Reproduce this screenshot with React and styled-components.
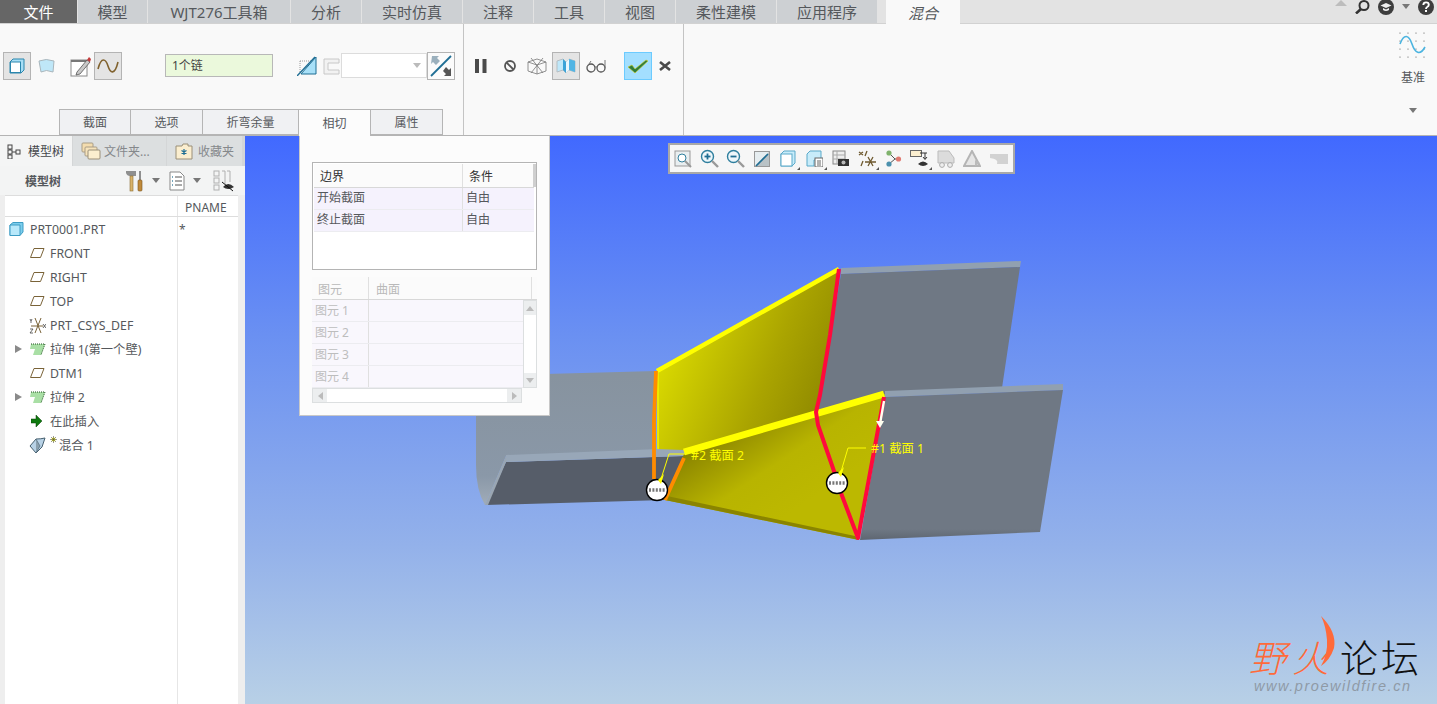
import React from 'react';
import styled, { createGlobalStyle } from 'styled-components';

const GlobalStyle = createGlobalStyle`
  html, body {
    margin: 0;
    padding: 0;
    background: #f4f4f4;
    font-family: "Noto Sans", "Noto Sans CJK SC", sans-serif;
  }
`;

const Page = styled.div`
  width: 1437px;
  height: 704px;
  overflow: hidden;
  display: flex;
  flex-direction: column;
  position: relative;
`;

/* top tabs */
const TabBar = styled.div`
  display: flex;
  height: 23px;
  background: #e3e3e3;
  align-items: stretch;
  position: relative;
`;

const TopTab = styled.div`
  width: ${p => p.$w}px;
  margin-right: 1px;
  box-sizing: border-box;
  display: flex;
  align-items: center;
  justify-content: center;
  font-size: 15px;
  background: ${p => (p.$dark ? '#666666' : '#cdd0d3')};
  color: ${p => (p.$dark ? '#ffffff' : '#55585c')};
`;

const ContextTab = styled.div`
  width: 74px;
  margin-left: 8px;
  margin-bottom: -1px;
  position: relative;
  z-index: 2;
  display: flex;
  align-items: center;
  justify-content: center;
  font-size: 15px;
  font-style: italic;
  color: #55585c;
  background: #f9f9f9;
`;

const TopRight = styled.div`
  margin-left: auto;
  display: flex;
  align-items: flex-start;
  width: 102px;
  gap: 8px;
  padding-right: 3px;
  box-sizing: border-box;
`;

/* ribbon */
const Ribbon = styled.div`
  display: flex;
  height: 113px;
  background: #f9f9f9;
  border-top: 1px solid #d2d2d2;
  border-bottom: 1px solid #b4b4b4;
  box-sizing: border-box;
`;

const Group = styled.div`
  width: ${p => p.$w}px;
  box-sizing: border-box;
  border-right: 1px solid #c4c4c4;
  display: flex;
  flex-direction: column;
`;

const ControlRow = styled.div`
  height: 85px;
  padding-top: 28px;
  box-sizing: border-box;
  display: flex;
  align-items: flex-start;
`;

const Slot = styled.div`
  width: ${p => p.$w}px;
  height: 28px;
  margin-left: ${p => p.$ml || 0}px;
  box-sizing: border-box;
  display: flex;
  align-items: center;
  justify-content: center;
  flex: none;
  ${p => p.$pressed && 'background: #e4e4e4; border: 1px solid #b4b4b4;'}
  ${p => p.$ok && 'background: #a3dfff; border: 1px solid #6ccbff;'}
  ${p => p.$framed && 'background: #fbfbfb; border: 1px solid #b4b4b4;'}
`;

const ChainInput = styled.div`
  width: 108px;
  height: 23px;
  margin-left: 43px;
  margin-top: 2px;
  box-sizing: border-box;
  flex: none;
  background: #ebf9dc;
  border: 1px solid #b8b8b8;
  font-size: 12px;
  color: #444;
  line-height: 21px;
  padding-left: 6px;
`;

const Combo = styled.div`
  width: 86px;
  height: 25px;
  margin-top: 1px;
  margin-left: 1px;
  box-sizing: border-box;
  flex: none;
  background: #fff;
  border: 1px solid #dcdcdc;
  display: flex;
  align-items: center;
  justify-content: flex-end;
  padding-right: 5px;
`;

const Caret = styled.span`
  width: 0;
  height: 0;
  flex: none;
  margin-top: ${p => p.$mt || 0}px;
  border-left: 4px solid transparent;
  border-right: 4px solid transparent;
  border-top: 5px solid ${p => p.$c || '#777'};
`;

const SubTabs = styled.div`
  display: flex;
  padding-left: 59px;
  height: 26px;
  position: relative;
  z-index: 3;
`;

const SubTab = styled.div`
  width: ${p => p.$w}px;
  height: ${p => (p.$active ? 27 : 26)}px;
  box-sizing: border-box;
  border: 1px solid #b5b5b5;
  border-left-width: ${p => (p.$first ? 1 : 0)}px;
  border-bottom: ${p => (p.$active ? 'none' : '1px solid #b5b5b5')};
  background: ${p => (p.$active ? '#fcfcfc' : '#f0f1f3')};
  display: flex;
  align-items: center;
  justify-content: center;
  font-size: 12px;
  color: #55585c;
`;

const DatumColumn = styled.div`
  margin-left: auto;
  width: 48px;
  display: flex;
  flex-direction: column;
  align-items: center;
  padding-top: 8px;
  font-size: 12px;
  color: #55585c;
`;

const DatumLabel = styled.div`
  margin-top: 10px;
  margin-bottom: 22px;
`;

/* main */
const Main = styled.div`
  flex: 1;
  display: flex;
  position: relative;
  min-height: 0;
`;

const LeftPanel = styled.div`
  width: 245px;
  flex: none;
  background: #eeeeee;
  display: flex;
  flex-direction: column;
`;

const PanelTabs = styled.div`
  display: flex;
  height: 30px;
  background: #d4d6d7;
  align-items: stretch;
`;

const PanelTab = styled.div`
  width: ${p => p.$w}px;
  margin-right: 1px;
  box-sizing: border-box;
  display: flex;
  align-items: center;
  gap: ${p => p.$gap}px;
  padding-left: ${p => p.$pl}px;
  font-size: 12px;
  background: ${p => (p.$active ? '#f4f5f5' : '#dcdfe0')};
  color: ${p => (p.$active ? '#44474b' : '#85888b')};
`;

const PanelBar = styled.div`
  height: 29px;
  background: #f3f4f4;
  display: flex;
  align-items: center;
  padding-left: 25px;
  font-size: 12px;
  font-weight: 700;
  color: #55585c;
`;

const BarIcons = styled.div`
  display: flex;
  align-items: center;
  margin-left: 65px;
`;

const BarItem = styled.div`
  display: flex;
  align-items: center;
  margin-right: ${p => p.$mr}px;
  gap: 8px;
`;

const TreePane = styled.div`
  flex: 1;
  margin: 0 7px 0 5px;
  background: #ffffff;
  position: relative;
  display: flex;
  flex-direction: column;
`;

const ColumnHead = styled.div`
  height: 22px;
  box-sizing: border-box;
  border-top: 1px solid #dddddd;
  border-bottom: 1px solid #dddddd;
  display: flex;
  font-size: 12px;
  color: #55585c;
`;

const NameCol = styled.div`
  width: 173px;
  flex: none;
  box-sizing: border-box;
  border-right: 1px solid #e6e6e6;
`;

const PnameCol = styled.div`
  padding-left: 7px;
  line-height: 24px;
`;

const TreeRows = styled.div`
  flex: 1;
  display: flex;
`;

const TreeList = styled.div`
  width: 173px;
  flex: none;
  box-sizing: border-box;
  border-right: 1px solid #e6e6e6;
`;

const TreeRow = styled.div`
  height: 24px;
  display: flex;
  align-items: center;
  font-size: 12.3px;
  color: #55585c;
  white-space: nowrap;
  padding-left: ${p => p.$pl}px;
`;

const Expander = styled.span`
  width: 0;
  height: 0;
  margin-right: 7px;
  border-top: 4px solid transparent;
  border-bottom: 4px solid transparent;
  border-left: 7px solid #8a8a8a;
`;

const TreeLabel = styled.span`
  margin-left: ${p => p.$ml}px;
`;

const StarMark = styled.span`
  width: 7px;
  margin-left: 4px;
  align-self: flex-start;
  margin-top: 3px;
  margin-right: 2px;
  display: flex;
`;

const Stars = styled.div`
  padding: 4px 0 0 1px;
  font-size: 12px;
  color: #55585c;
`;

/* viewport */
const Viewport = styled.div`
  flex: 1;
  position: relative;
  background: linear-gradient(180deg, #4169ff 0%, #6a90f2 35%, #93b1ea 72%, #b8d0e6 100%);
`;

const SceneSvg = styled.svg`
  display: block;
`;

const SceneText = styled.text`
  font-size: 12.3px;
  fill: #ffff00;
  font-family: "Noto Sans", "Noto Sans CJK SC", sans-serif;
`;

const ViewTools = styled.div`
  position: absolute;
  left: 423px;
  top: 7px;
  width: 347px;
  height: 31px;
  box-sizing: border-box;
  background: #f6f6f6;
  border: 2px solid #a8a8a8;
  display: flex;
  align-items: center;
`;

const ViewTool = styled.div`
  width: 26.3px;
  height: 22px;
  flex: none;
  display: flex;
  align-items: center;
  justify-content: center;
  position: relative;
  ${p => p.$more && `
    &::after {
      content: '';
      position: absolute;
      right: 1px;
      bottom: 0;
      border-left: 3px solid transparent;
      border-bottom: 3px solid #555;
    }
  `}
`;

const Watermark = styled.div`
  position: absolute;
  right: 18px;
  bottom: 10px;
  width: 170px;
`;

const MarkLine = styled.div`
  display: flex;
  align-items: center;
  height: 44px;
  position: relative;
  font-family: "Noto Sans CJK SC", sans-serif;
  line-height: 44px;
`;

const MarkWild = styled.span`
  font-size: 37px;
  font-style: italic;
  font-weight: 300;
  color: #ff6a3a;
  letter-spacing: 6px;
  width: 91px;
  flex: none;
  white-space: nowrap;
`;

const MarkForum = styled.span`
  font-size: 38px;
  font-weight: 300;
  color: #111;
  letter-spacing: 3px;
  white-space: nowrap;
`;

const MarkFlame = styled.svg`
  position: absolute;
  left: 66px;
  top: -18px;
`;

const MarkUrl = styled.div`
  font-size: 14.5px;
  font-style: italic;
  color: #8f9aa6;
  letter-spacing: 1.55px;
  font-family: "Liberation Sans", sans-serif;
  padding-left: 5px;
  white-space: nowrap;
`;

/* dashboard slide-up */
const Popup = styled.div`
  position: absolute;
  left: 299px;
  top: 0;
  width: 251px;
  height: 280px;
  box-sizing: border-box;
  background: #fcfcfc;
  border: 1px solid #c8c8c8;
  border-top: none;
  padding: 26px 12px 0;
`;

const BoundTable = styled.div`
  width: 225px;
  height: 108px;
  box-sizing: border-box;
  background: #fff;
  border: 1px solid #b4b4b4;
  padding: 1px 2px 0 1px;
`;

const HeadRow = styled.div`
  display: flex;
  height: ${p => p.$h}px;
  box-sizing: border-box;
  background: #fbfbfb;
  border-bottom: 1px solid #d8d8d8;
  font-size: 12px;
  color: ${p => (p.$dim ? '#b9b9b9' : '#333')};
`;

const DataRow = styled.div`
  display: flex;
  height: 22px;
  box-sizing: border-box;
  background: ${p => (p.$dim ? '#f9f7fd' : '#f5f2fd')};
  border-bottom: 1px solid #ececf0;
  font-size: 12px;
  color: ${p => (p.$dim ? '#bdbdbd' : '#55585c')};
  line-height: ${p => (p.$dim ? 21 : 20)}px;
`;

const Cell = styled.div`
  width: ${p => p.$w}px;
  flex: none;
  box-sizing: border-box;
  padding-left: ${p => p.$pl}px;
  line-height: ${p => (p.$head ? '26px' : 'inherit')};
  border-right: ${p => (p.$line ? '1px solid #e0e0e0' : 'none')};
`;

const EdgeBar = styled.div`
  width: 3px;
  flex: none;
  background: #cfcfcf;
`;

const ElemBlock = styled.div`
  width: 225px;
  margin-top: 7px;
`;

const ElemBody = styled.div`
  display: flex;
`;

const ElemRows = styled.div`
  width: 211px;
  flex: none;
`;

const VScroll = styled.div`
  width: 14px;
  flex: none;
  box-sizing: border-box;
  border: 1px solid #dcdfe0;
  background: #fff;
  display: flex;
  flex-direction: column;
  justify-content: space-between;
`;

const HScroll = styled.div`
  width: 210px;
  height: 15px;
  box-sizing: border-box;
  border: 1px solid #dcdfe0;
  background: #fff;
  display: flex;
  justify-content: space-between;
`;

const ScrollBtn = styled.div`
  width: ${p => (p.$h ? 14 : 12)}px;
  height: ${p => (p.$h ? 13 : 14)}px;
  background: #eceeef;
  display: flex;
  align-items: center;
  justify-content: center;
`;

const Tri = styled.span`
  width: 0;
  height: 0;
  border: 4px solid transparent;
  ${p => p.$dir === 'up' && 'border-top: 0; border-bottom: 5px solid #bbb;'}
  ${p => p.$dir === 'down' && 'border-bottom: 0; border-top: 5px solid #bbb;'}
  ${p => p.$dir === 'left' && 'border-left: 0; border-right: 5px solid #bbb;'}
  ${p => p.$dir === 'right' && 'border-right: 0; border-left: 5px solid #bbb;'}
`;

/* icons */
const Ic = ({ w = 20, h = 20, children }) => (
  <svg width={w} height={h} viewBox={`0 0 ${w} ${h}`}>{children}</svg>
);

const SolidIcon = () => (
  <Ic w={16} h={16}>
    <path d="M1 4 L4 1 H15 V12 L12 15 H1 Z" fill="#a8def5" stroke="#2a86ad" />
    <rect x="1.5" y="4" width="10" height="10.5" fill="#fff" stroke="#2a86ad" />
  </Ic>
);
const SurfaceIcon = () => (
  <Ic w={17} h={16}>
    <path d="M1 3 Q8 0 16 3 L15 14 Q8 11 3 14 Z" fill="#bfe7f8" stroke="#a9b6bc" />
  </Ic>
);
const SketchIcon = () => (
  <Ic w={22} h={21}>
    <rect x="1" y="4" width="16" height="16" fill="#fff" stroke="#8a8a8a" />
    <rect x="1" y="4" width="16" height="2" fill="#777" />
    <path d="M7 16 L17 4 L20 6 L10 18 L6 19 Z" fill="#c9c9c9" stroke="#555" strokeWidth="0.8" />
    <path d="M17 4 L19 1 L21 3 L20 6 Z" fill="#c43c3c" />
  </Ic>
);
const WaveIcon = ({ color = '#80622e', w = 22, h = 14 }) => (
  <Ic w={w} h={h}>
    <path d={`M1 ${h - 4} C ${w * 0.2} -3, ${w * 0.4} 0, ${w * 0.5} ${h / 2} S ${w * 0.8} ${h + 3}, ${w - 1} 3`} fill="none" stroke={color} strokeWidth="1.6" />
  </Ic>
);
const TangentIcon = () => (
  <Ic w={20} h={20}>
    <path d="M3 5 H15 M3 5 V16" stroke="#999" strokeDasharray="1 1" fill="none" />
    <path d="M4 18 H19 V1 Z" fill="#a8e0f8" stroke="#1f6e94" />
    <path d="M0 20 L18 1" stroke="#1f6e94" strokeWidth="1.4" />
  </Ic>
);
const OffsetIcon = () => (
  <Ic w={17} h={17}>
    <path d="M1 1 H16 V5 H5 V12 H16 V16 H1 Z" fill="#f2f2f2" stroke="#c8c8c8" />
  </Ic>
);
const FlipIcon = () => (
  <Ic w={24} h={24}>
    <path d="M2 22 L22 2" stroke="#1f6e94" strokeWidth="1.8" />
    <path d="M3 2 H10 L8 4 L11 7 L7 11 L4 8 L2 10 Z" fill="#9bb0bd" />
    <path d="M22 22 H15 L17 20 L14 17 L17 13 L20 16 L22 14 Z" fill="#555" />
  </Ic>
);
const PauseIcon = () => (
  <Ic w={12} h={14}>
    <rect x="0" y="0" width="4" height="14" fill="#4a4a4a" />
    <rect x="7.5" y="0" width="4" height="14" fill="#4a4a4a" />
  </Ic>
);
const StopIcon = () => (
  <Ic w={14} h={14}>
    <circle cx="7" cy="7" r="5" fill="none" stroke="#555" strokeWidth="1.8" />
    <path d="M3.5 3.5 L10.5 10.5" stroke="#555" strokeWidth="1.8" />
  </Ic>
);
const WireIcon = () => (
  <Ic w={20} h={20}>
    <path d="M1 6 L10 3 L19 6 V15 L10 18 L1 15 Z M1 6 L10 9 L19 6 M10 9 V18 M4 2 L16 17 M16 2 L4 17" fill="none" stroke="#777" strokeWidth="0.8" />
  </Ic>
);
const PreviewIcon = () => (
  <Ic w={20} h={16}>
    <path d="M1 3 L7 1 L10 4 L13 1 L19 3 V14 L13 12 L10 15 L7 12 L1 14 Z" fill="#bfe8fa" stroke="#b5bec3" />
    <path d="M7 1 L10 4 V15 L7 12 Z" fill="#3aa3d8" />
    <path d="M13 1 L10 4 V15 L13 12 Z" fill="#e9f7fe" />
    <path d="M13 1 L19 3 V14 L13 12 Z" fill="#53b5e4" />
  </Ic>
);
const GlassesIcon = () => (
  <Ic w={20} h={14}>
    <circle cx="5" cy="9" r="4" fill="none" stroke="#555" strokeWidth="1.3" />
    <circle cx="15" cy="9" r="4" fill="none" stroke="#555" strokeWidth="1.3" />
    <path d="M1 8 L5 2 M9 8 H11 M19 9 V1" fill="none" stroke="#777" />
  </Ic>
);
const CheckIcon = () => (
  <Ic w={22} h={16}>
    <path d="M1 9 L5 7 L8 11 L19 2 L21 3 L8 15 Z" fill="#2f7d3e" stroke="#d8d020" strokeWidth="0.6" />
  </Ic>
);
const CrossIcon = () => (
  <Ic w={12} h={10}>
    <path d="M1 1 L11 9 M11 1 L1 9" stroke="#4a4a4a" strokeWidth="2.6" />
  </Ic>
);
const DatumCurveIcon = () => (
  <Ic w={28} h={26}>
    {[1, 9, 17, 25].map(x => [1, 9, 17, 25].map(y => <circle key={`${x}${y}`} cx={x} cy={y} r="0.6" fill="#555" />))}
    <path d="M1 12 C5 1, 10 3, 13 12 S21 24, 26 15" fill="none" stroke="#4bb4e0" strokeWidth="1.6" />
  </Ic>
);
const SearchIcon = () => (
  <Ic w={15} h={14}>
    <circle cx="9" cy="5.5" r="4.5" fill="none" stroke="#333" strokeWidth="2" />
    <path d="M6 9 L1 13.5" stroke="#333" strokeWidth="2.6" />
  </Ic>
);
const CapIcon = () => (
  <Ic w={16} h={15}>
    <circle cx="8" cy="7" r="8" fill="#3d3d3d" />
    <path d="M2.5 5.5 L8 3 L13.5 5.5 L8 8 Z M5 8 V10 Q8 12 11 10 V8 L8 9.4 Z" fill="#eee" />
  </Ic>
);
const HelpIcon = () => (
  <Ic w={16} h={15}>
    <circle cx="8" cy="7" r="8" fill="#3d3d3d" />
    <path d="M5.3 5 Q5.5 2.4 8 2.4 Q10.8 2.4 10.8 4.8 Q10.8 6.2 9.2 7 Q8 7.6 8 9" fill="none" stroke="#fff" strokeWidth="1.9" />
    <rect x="7" y="10" width="2" height="2" fill="#fff" />
  </Ic>
);
const NavUp = () => (
  <Ic w={12} h={6}>
    <path d="M0 6 L6 0 L12 6 Z" fill="#bdbdbd" />
  </Ic>
);
const NodesIcon = () => (
  <Ic w={14} h={15}>
    <g fill="none" stroke="#444">
      <rect x="1" y="1" width="4" height="4" />
      <rect x="1" y="6" width="4" height="4" />
      <rect x="1" y="11" width="4" height="4" />
      <rect x="9" y="6" width="4" height="4" />
      <path d="M3 5 V6 M3 10 V11 M5 8 H9" />
    </g>
  </Ic>
);
const FolderStackIcon = () => (
  <Ic w={20} h={20}>
    <rect x="1" y="2" width="11" height="9" rx="1" fill="#f3dcae" stroke="#a99d86" />
    <rect x="4" y="6" width="12" height="9" rx="1" fill="#f6e3bb" stroke="#a99d86" />
    <rect x="7" y="9" width="12" height="9" rx="1" fill="#fbeecf" stroke="#9a8f78" />
  </Ic>
);
const FavIcon = () => (
  <Ic w={18} h={17}>
    <path d="M1 3 H7 L8 1 H13 V3 H17 V16 H1 Z" fill="#fbeecf" stroke="#9a8f78" />
    <path d="M9 6 V12 M6.5 7.5 L11.5 10.5 M11.5 7.5 L6.5 10.5" stroke="#1f6e94" strokeWidth="1.2" />
  </Ic>
);
const HammerIcon = () => (
  <Ic w={18} h={22}>
    <path d="M0 1 H10 V6 H7 V21 H4 V6 Q1 6 0 3 Z" fill="#8f8f8f" />
    <rect x="4" y="6" width="3" height="15" fill="#d9b36a" stroke="#8d6f35" strokeWidth="0.6" />
    <rect x="13" y="1" width="2" height="9" fill="#8f8f8f" />
    <rect x="12" y="10" width="4" height="11" rx="1" fill="#c08a3a" stroke="#7a5620" strokeWidth="0.6" />
  </Ic>
);
const ListDocIcon = () => (
  <Ic w={16} h={20}>
    <path d="M1 1 H11 L15 5 V19 H1 Z" fill="#fff" stroke="#888" />
    <path d="M6 6 H13 M6 10 H13 M6 14 H13" stroke="#555" />
    <path d="M3 6 H4 M3 10 H4 M3 14 H4" stroke="#4a8aa8" strokeWidth="1.6" />
  </Ic>
);
const HiddenNodesIcon = () => (
  <Ic w={22} h={22}>
    <g fill="none" stroke="#b0b0b0">
      <rect x="1" y="1" width="5" height="5" />
      <rect x="1" y="8" width="5" height="5" />
      <rect x="1" y="15" width="5" height="5" />
      <path d="M9 1 H12 V14 M14 1 H17 V12" />
    </g>
    <path d="M10 17 Q15 11 21 17 Q15 21 10 17 Z" fill="#333" />
    <path d="M9 12 L20 21" stroke="#111" />
  </Ic>
);
const CubeIcon = () => (
  <Ic w={15} h={14}>
    <path d="M1 3 L4 0.5 H14 V10 L11 13.5 H1 Z" fill="#7ccdec" stroke="#3d9cc4" />
    <path d="M1 3 H11 V13.5 H1 Z" fill="#b8e8fa" stroke="#3d9cc4" />
  </Ic>
);
const PlaneIcon = () => (
  <Ic w={16} h={12}>
    <path d="M5 1.5 H15 L11.5 10.5 H1.5 Z" fill="none" stroke="#7a6338" />
  </Ic>
);
const CsysIcon = () => (
  <Ic w={17} h={17}>
    <path d="M6 1 L12 16 M12 1 L6 16 M2 9 H14" stroke="#7a6338" fill="none" />
    <path d="M1 2 L2 4 L3 2 M2 4 V6 M1 12 H4 L1 16 H4 M14 7 L17 11 M17 7 L14 11" stroke="#444" strokeWidth="0.8" fill="none" />
  </Ic>
);
const ExtrudeIcon = () => (
  <Ic w={17} h={14}>
    <path d="M2 2 H16 L12 13 H4 L6 7 H1 Z" fill="#a9dfa5" />
    <path d="M2 2 H16 L12 13" fill="none" stroke="#225522" strokeDasharray="1 1" />
  </Ic>
);
const InsertIcon = () => (
  <Ic w={12} h={12}>
    <path d="M0 4 H5 V0 L11 6 L5 12 V8 H0 Z" fill="#0f7a0f" stroke="#0a3d0a" strokeWidth="0.5" />
  </Ic>
);
const BlendIcon = () => (
  <Ic w={17} h={17}>
    <path d="M1 9 L7 2 Q12 2 16 1 L13 10 L7 16 Z" fill="#b8d2e6" stroke="#47606f" />
    <path d="M7 2 L11 9 L7 16" fill="#8aa0ae" stroke="#47606f" strokeWidth="0.6" />
  </Ic>
);
const MiniStar = () => (
  <Ic w={7} h={7}>
    <circle cx="3.5" cy="3.5" r="2" fill="#ffff00" />
    <path d="M3.5 0 V7 M0 3.5 H7 M1 1 L6 6 M6 1 L1 6" stroke="#555" strokeWidth="0.6" />
  </Ic>
);

const Lens = ({ sign }) => (
  <Ic w={19} h={19}>
    <circle cx="7.5" cy="7.5" r="6" fill="#eef7fb" stroke="#2f7f9e" strokeWidth="1.4" />
    {sign && <path d="M4.5 7.5 H10.5" stroke="#1f6e94" strokeWidth="1.8" />}
    {sign === '+' && <path d="M7.5 4.5 V10.5" stroke="#1f6e94" strokeWidth="1.8" />}
    <path d="M12 12 L18 18" stroke="#999" strokeWidth="2.4" />
  </Ic>
);

const viewIcons = [
  {
    key: 'refit',
    icon: (
      <Ic w={18} h={18}>
        <rect x="1" y="1" width="15" height="15" fill="#e9eef0" stroke="#999" />
        <circle cx="8" cy="8" r="4" fill="#fff" stroke="#2f7f9e" />
        <path d="M11 11 L17 17" stroke="#999" strokeWidth="2" />
      </Ic>
    ),
  },
  { key: 'in', icon: <Lens sign="+" /> },
  { key: 'out', icon: <Lens sign="-" /> },
  {
    key: 'repaint',
    icon: (
      <Ic w={16} h={16}>
        <rect x="0.5" y="0.5" width="15" height="15" fill="#e6edf0" stroke="#999" />
        <path d="M1 15 L15 1 V15 Z" fill="#b9c2c6" />
        <path d="M2 15 L14 3" stroke="#1f6e94" strokeWidth="1.6" />
      </Ic>
    ),
  },
  {
    key: 'cube',
    more: true,
    icon: (
      <Ic w={16} h={17}>
        <path d="M1 4 L4 1 H15 V13 L12 16 H1 Z" fill="#c8ecfa" stroke="#5aa9c9" />
        <rect x="1" y="4" width="11" height="12" fill="#fff" stroke="#5aa9c9" />
      </Ic>
    ),
  },
  {
    key: 'saved',
    more: true,
    icon: (
      <Ic w={17} h={17}>
        <path d="M1 4 L4 1 H15 V10 H8 V16 H1 Z" fill="#c8ecfa" stroke="#5aa9c9" />
        <rect x="9" y="8" width="8" height="9" fill="#fff" stroke="#666" />
        <path d="M11 11 H15 M11 13 H15 M11 15 H15" stroke="#666" />
      </Ic>
    ),
  },
  {
    key: 'camera',
    icon: (
      <Ic w={17} h={17}>
        <rect x="1" y="1" width="12" height="13" fill="#eee" stroke="#888" />
        <path d="M1 5 H13 M1 9 H13 M5 1 V14" stroke="#aaa" />
        <rect x="6" y="9" width="11" height="7" fill="#333" />
        <circle cx="11.5" cy="12.5" r="2" fill="#bbb" />
      </Ic>
    ),
  },
  {
    key: 'datums',
    more: true,
    icon: (
      <Ic w={18} h={17}>
        <path d="M1 2 L5 5 M5 2 L1 5 M9 1 L7 6 M3 16 L5 11 M10 7 L15 16 M15 7 L10 16 M7 12 H18" stroke="#6f5a30" strokeWidth="1.3" fill="none" />
      </Ic>
    ),
  },
  {
    key: 'graph',
    icon: (
      <Ic w={17} h={17}>
        <path d="M4 3 L10 9 L4 14" fill="none" stroke="#555" />
        <path d="M10 9 H13" stroke="#555" />
        <circle cx="4" cy="3" r="2.6" fill="#7fb26c" />
        <circle cx="13.5" cy="9" r="2.6" fill="#e07a72" />
        <circle cx="4" cy="14" r="2.6" fill="#4b90ad" />
      </Ic>
    ),
  },
  {
    key: 'display',
    more: true,
    icon: (
      <Ic w={20} h={18}>
        <rect x="0.5" y="0.5" width="11" height="6" fill="#fbeecf" stroke="#666" />
        <path d="M15 3 V9 M13 7 L15 9.5 L17 7 M10 3 H17" stroke="#333" fill="none" />
        <path d="M8 14 Q13 9 18 14 Q13 18 8 14 Z" fill="#333" />
      </Ic>
    ),
  },
  {
    key: 'spin',
    icon: (
      <Ic w={18} h={18}>
        <path d="M1 1 H12 L17 8 V13 H1 Z" fill="#dcdcdc" stroke="#bbb" />
        <circle cx="5" cy="15" r="2.4" fill="#eee" stroke="#aaa" />
        <circle cx="13" cy="15" r="2.4" fill="#eee" stroke="#aaa" />
      </Ic>
    ),
  },
  {
    key: 'tri',
    icon: (
      <Ic w={18} h={18}>
        <path d="M9 1 L17 16 H1 Z" fill="#e6e6e6" stroke="#b5b5b5" strokeWidth="2" />
        <path d="M12 10 L17 13 L12 16 Z" fill="#bbb" />
      </Ic>
    ),
  },
  {
    key: 'swoosh',
    icon: (
      <Ic w={18} h={12}>
        <path d="M0 1 H18 V11 H7 Q9 6 0 5 Z" fill="#d2d2d2" />
      </Ic>
    ),
  },
];

const topTabs = [
  ['文件', 77, true], ['模型', 69], ['WJT276工具箱', 142], ['分析', 70], ['实时仿真', 100],
  ['注释', 70], ['工具', 70], ['视图', 70], ['柔性建模', 100], ['应用程序', 100],
];

const subTabs = [['截面', 72], ['选项', 72], ['折弯余量', 96], ['相切', 72, true], ['属性', 72]];

const treeRows = [
  { pl: 4, icon: <CubeIcon />, label: 'PRT0001.PRT', ml: 6 },
  { pl: 24, icon: <PlaneIcon />, label: 'FRONT', ml: 5 },
  { pl: 24, icon: <PlaneIcon />, label: 'RIGHT', ml: 5 },
  { pl: 24, icon: <PlaneIcon />, label: 'TOP', ml: 5 },
  { pl: 24, icon: <CsysIcon />, label: 'PRT_CSYS_DEF', ml: 4 },
  { pl: 10, arrow: true, icon: <ExtrudeIcon />, label: '拉伸 1(第一个壁)', ml: 4 },
  { pl: 24, icon: <PlaneIcon />, label: 'DTM1', ml: 5 },
  { pl: 10, arrow: true, icon: <ExtrudeIcon />, label: '拉伸 2', ml: 4 },
  { pl: 26, icon: <InsertIcon />, label: '在此插入', ml: 7 },
  { pl: 24, icon: <BlendIcon />, star: true, label: '混合 1', ml: 0 },
];

const Marker = ({ x, y }) => (
  <g>
    <circle cx={x} cy={y} r="10.5" fill="#ffffff" stroke="#000000" strokeWidth="1.4" />
    <path d={`M${x - 8} ${y} H${x + 8}`} stroke="#777" strokeWidth="3.4" strokeDasharray="2 1.4" />
  </g>
);

const Scene = () => (
  <SceneSvg width="1192" height="568" viewBox="245 136 1192 568">
    <defs>
      <linearGradient id="upperFace" gradientUnits="userSpaceOnUse" x1="660" y1="370" x2="830" y2="440">
        <stop offset="0" stopColor="#d8d800" />
        <stop offset="0.55" stopColor="#aaa400" />
        <stop offset="1" stopColor="#888200" />
      </linearGradient>
      <linearGradient id="lowerFace" gradientUnits="userSpaceOnUse" x1="690" y1="450" x2="750" y2="540">
        <stop offset="0" stopColor="#8a8400" />
        <stop offset="0.55" stopColor="#b8b400" />
        <stop offset="1" stopColor="#bcb800" />
      </linearGradient>
      <linearGradient id="leftWall" gradientUnits="userSpaceOnUse" x1="0" y1="375" x2="0" y2="510">
        <stop offset="0" stopColor="#87939f" />
        <stop offset="0.75" stopColor="#8a98a8" />
        <stop offset="1" stopColor="#a5b0bb" />
      </linearGradient>
      <linearGradient id="wallEdge" gradientUnits="userSpaceOnUse" x1="0" y1="385" x2="0" y2="540">
        <stop offset="0" stopColor="#6f7884" />
        <stop offset="0.93" stopColor="#6f7884" />
        <stop offset="1" stopColor="#5e6671" />
      </linearGradient>
    </defs>

    {/* left channel */}
    <path d="M476 376 L656 371 L656 450 L506 456 L485 505 Q476 490 476 465 Z" fill="url(#leftWall)" />
    <path d="M506 462 L684 456 L665 500 L486 505 Z" fill="#565d69" />
    <path d="M506 455 L684 448 L684 456 L506 462 Z" fill="#98a7b8" />
    <path d="M485 505 L506 456 L506 462 L488 505 Z" fill="#9aa6b2" />

    {/* right walls */}
    <path d="M841 268 L1021 261 L1020 267 L841 274 Z" fill="#91a0b0" />
    <path d="M841 274 L1020 267 L1002 388 L885 394 L818 412 Z" fill="#6f7884" />
    <path d="M885 391 L1063 384 L1063 390 L885 397 Z" fill="#91a0b0" />
    <path d="M885 397 L1063 390 L1040 532 L860 540 Z" fill="url(#wallEdge)" />

    {/* blend faces */}
    <path d="M657 371 L839 269 L818 412 L684 450 L657 449 Z" fill="url(#upperFace)" />
    <path d="M684 454 L885 394 L859 540 L665 500 Z" fill="url(#lowerFace)" />
    <path d="M665 500 L859 540 L855 536 L667 496 Z" fill="#8a8400" />

    {/* edges */}
    <path d="M657 371 L839 269" stroke="#ffff00" strokeWidth="4.5" fill="none" />
    <path d="M684 452 L884 394" stroke="#ffff00" strokeWidth="7" fill="none" />
    <path d="M658 372 V449" stroke="#f0f000" strokeWidth="1.6" fill="none" />
    <path d="M839 269 L830 335 L820 395 L816 412 L818 425 L835 474 M841 493 L858 538 L884 397" stroke="#ff0a3c" strokeWidth="4" fill="none" strokeLinejoin="round" />
    <path d="M656 371 L654 420 L654 479 M665 500 L684 458" stroke="#ff8c00" strokeWidth="3.8" fill="none" />
    <path d="M884 401 L880 424" stroke="#fffff0" strokeWidth="2.4" fill="none" />
    <path d="M876 421 H884 L880 428 Z" fill="#fffff0" />

    {/* section markers */}
    <Marker x={657} y={490} />
    <Marker x={837} y={483} />
    <path d="M660 482 L669 454 H685" stroke="#ffff00" fill="none" />
    <path d="M840 475 L848 448 H866" stroke="#ffff00" fill="none" />
    <path d="M658 480 L664 474 L661 484 Z" fill="#ffff00" />
    <path d="M838 473 L844 467 L841 477 Z" fill="#ffff00" />
    <SceneText x="691" y="460">#2 截面 2</SceneText>
    <SceneText x="871" y="453">#1 截面 1</SceneText>
  </SceneSvg>
);

export default function App() {
  return (
    <Page>
      <GlobalStyle />
      <TabBar>
        {topTabs.map(([label, w, dark]) => (
          <TopTab key={label} $w={w} $dark={dark}>{label}</TopTab>
        ))}
        <ContextTab>混合</ContextTab>
        <TopRight>
          <NavUp />
          <SearchIcon />
          <CapIcon />
          <Caret $mt={4} />
          <HelpIcon />
        </TopRight>
      </TabBar>

      <Ribbon>
        <Group $w={464}>
          <ControlRow>
            <Slot $w={28} $ml={3} $pressed><SolidIcon /></Slot>
            <Slot $w={28} $ml={1}><SurfaceIcon /></Slot>
            <Slot $w={28} $ml={7}><SketchIcon /></Slot>
            <Slot $w={28} $ml={-1} $pressed><WaveIcon /></Slot>
            <ChainInput>1个链</ChainInput>
            <Slot $w={24} $ml={22}><TangentIcon /></Slot>
            <Slot $w={18} $ml={3}><OffsetIcon /></Slot>
            <Combo><Caret $c="#bbb" /></Combo>
            <Slot $w={28} $framed><FlipIcon /></Slot>
          </ControlRow>
          <SubTabs>
            {subTabs.map(([label, w, active], i) => (
              <SubTab key={label} $w={w} $active={active} $first={i === 0}>{label}</SubTab>
            ))}
          </SubTabs>
        </Group>
        <Group $w={220}>
          <ControlRow>
            <Slot $w={14} $ml={10}><PauseIcon /></Slot>
            <Slot $w={14} $ml={15}><StopIcon /></Slot>
            <Slot $w={20} $ml={10}><WireIcon /></Slot>
            <Slot $w={28} $ml={5} $pressed><PreviewIcon /></Slot>
            <Slot $w={20} $ml={6}><GlassesIcon /></Slot>
            <Slot $w={28} $ml={18} $ok><CheckIcon /></Slot>
            <Slot $w={14} $ml={6}><CrossIcon /></Slot>
          </ControlRow>
        </Group>
        <DatumColumn>
          <DatumCurveIcon />
          <DatumLabel>基准</DatumLabel>
          <Caret />
        </DatumColumn>
      </Ribbon>

      <Main>
        <LeftPanel>
          <PanelTabs>
            <PanelTab $w={72} $pl={7} $gap={7} $active><NodesIcon />模型树</PanelTab>
            <PanelTab $w={93} $pl={8} $gap={3}><FolderStackIcon />文件夹...</PanelTab>
            <PanelTab $w={75} $pl={8} $gap={5}><FavIcon />收藏夹</PanelTab>
          </PanelTabs>
          <PanelBar>
            模型树
            <BarIcons>
              <BarItem $mr={9}><HammerIcon /><Caret /></BarItem>
              <BarItem $mr={12}><ListDocIcon /><Caret /></BarItem>
              <HiddenNodesIcon />
            </BarIcons>
          </PanelBar>
          <TreePane>
            <ColumnHead>
              <NameCol />
              <PnameCol>PNAME</PnameCol>
            </ColumnHead>
            <TreeRows>
              <TreeList>
                {treeRows.map(row => (
                  <TreeRow key={row.label} $pl={row.pl}>
                    {row.arrow && <Expander />}
                    {row.icon}
                    {row.star && <StarMark><MiniStar /></StarMark>}
                    <TreeLabel $ml={row.ml}>{row.label}</TreeLabel>
                  </TreeRow>
                ))}
              </TreeList>
              <Stars>*</Stars>
            </TreeRows>
          </TreePane>
        </LeftPanel>

        <Viewport>
          <Scene />
          <ViewTools>
            {viewIcons.map(t => (
              <ViewTool key={t.key} $more={t.more}>{t.icon}</ViewTool>
            ))}
          </ViewTools>
          <Watermark>
            <MarkLine>
              <MarkWild>野火</MarkWild>
              <MarkForum>论坛</MarkForum>
              <MarkFlame width="22" height="54" viewBox="0 0 22 54">
                <path d="M6 0 Q22 16 19 32 Q15 44 6 50 Q13 38 12 24 Q11 10 6 0 Z" fill="#ff6a3a" />
              </MarkFlame>
            </MarkLine>
            <MarkUrl>www.proewildfire.cn</MarkUrl>
          </Watermark>
        </Viewport>

        <Popup>
          <BoundTable>
            <HeadRow $h={24}>
              <Cell $w={149} $pl={6} $line $head>边界</Cell>
              <Cell $w={70} $pl={6} $head>条件</Cell>
              <EdgeBar />
            </HeadRow>
            <DataRow>
              <Cell $w={149} $pl={3} $line>开始截面</Cell>
              <Cell $w={73} $pl={3}>自由</Cell>
            </DataRow>
            <DataRow>
              <Cell $w={149} $pl={3} $line>终止截面</Cell>
              <Cell $w={73} $pl={3}>自由</Cell>
            </DataRow>
          </BoundTable>
          <ElemBlock>
            <HeadRow $h={23} $dim>
              <Cell $w={57} $pl={6} $line $head>图元</Cell>
              <Cell $w={163} $pl={7} $line $head>曲面</Cell>
            </HeadRow>
            <ElemBody>
              <ElemRows>
                {['图元 1', '图元 2', '图元 3', '图元 4'].map(label => (
                  <DataRow key={label} $dim>
                    <Cell $w={57} $pl={3} $line>{label}</Cell>
                  </DataRow>
                ))}
              </ElemRows>
              <VScroll>
                <ScrollBtn><Tri $dir="up" /></ScrollBtn>
                <ScrollBtn><Tri $dir="down" /></ScrollBtn>
              </VScroll>
            </ElemBody>
            <HScroll>
              <ScrollBtn $h><Tri $dir="left" /></ScrollBtn>
              <ScrollBtn $h><Tri $dir="right" /></ScrollBtn>
            </HScroll>
          </ElemBlock>
        </Popup>
      </Main>
    </Page>
  );
}
